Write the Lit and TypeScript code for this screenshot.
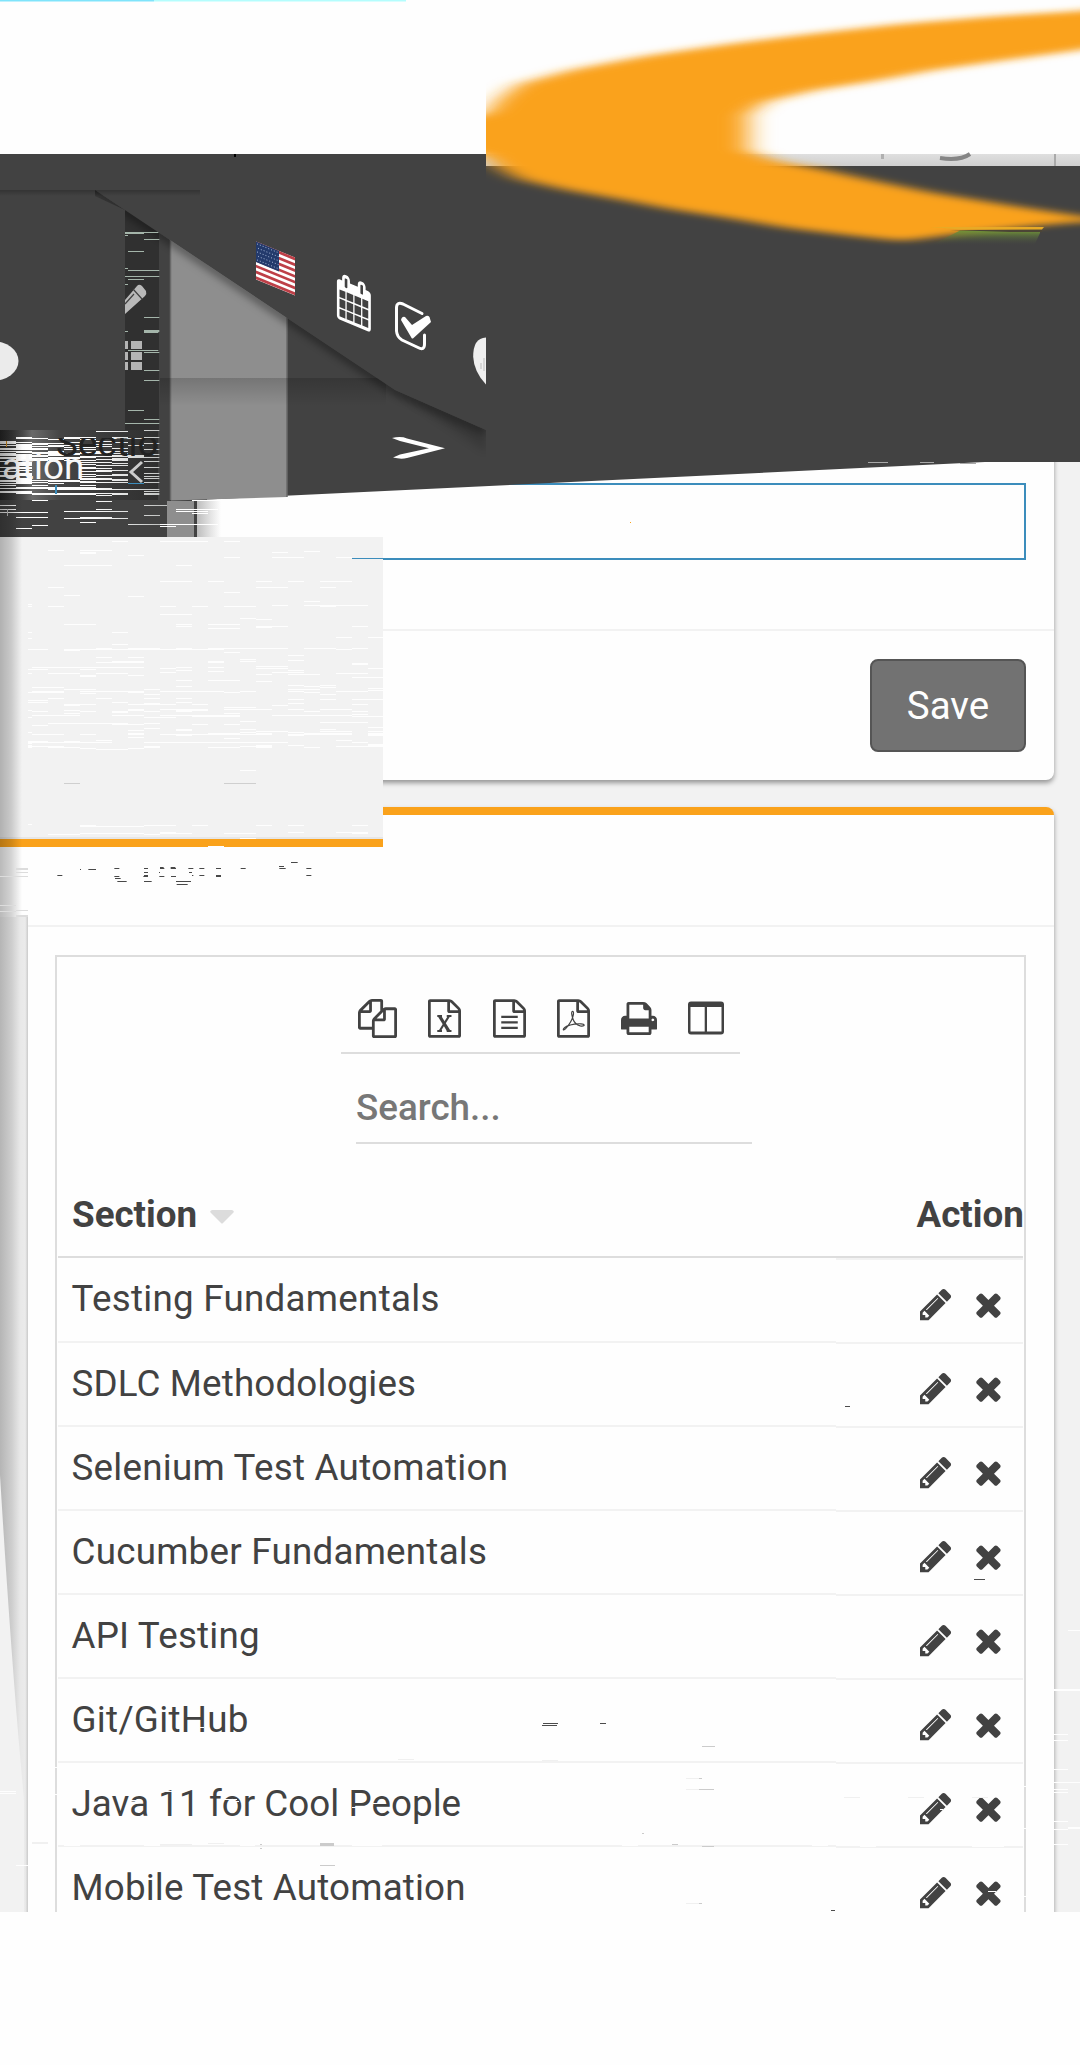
import { LitElement, html, css, svg } from "lit";
import { customElement } from "lit/decorators.js";

const FILE =
  "M1596 380q28 28 48 76t20 88v1152q0 40-28 68t-68 28h-1344q-40 0-68-28t-28-68v-1600q0-40 28-68t68-28h896q40 0 88 20t76 48zm-444-244v376h376q-10-29-22-41l-313-313q-12-12-41-22zm384 1528v-1024h-416q-40 0-68-28t-28-68v-416h-768v1536h1280z";
const COPY =
  "M1696 384q40 0 68 28t28 68v1216q0 40-28 68t-68 28h-960q-40 0-68-28t-28-68v-288h-544q-40 0-68-28t-28-68v-672q0-40 20-88t48-76l408-408q28-28 76-48t88-20h416q40 0 68 28t28 68v328q68-40 128-40h416zm-544 213l-299 299h299v-299zm-640-384l-299 299h299v-299zm196 647l316-316v-416h-384v416q0 40-28 68t-68 28h-416v640h512v-256q0-40 20-88t48-76zm956 804v-1152h-384v416q0 40-28 68t-68 28h-416v640h896z";
const PRINT =
  "M448 1536h896v-256h-896v256zm0-640h896v-384h-160q-40 0-68-28t-28-68v-160h-640v640zm1152 64q0-26-19-45t-45-19-45 19-19 45 19 45 45 19 45-19 19-45zm128 0v416q0 13-9.500 22.500t-22.500 9.500h-224v160q0 40-28 68t-68 28h-960q-40 0-68-28t-28-68v-160h-224q-13 0-22.500-9.500t-9.500-22.500v-416q0-79 56.500-135.500t135.500-56.500h64v-544q0-40 28-68t68-28h672q40 0 88 20t76 48l152 152q28 28 48 76t20 88v256h64q79 0 135.500 56.500t56.500 135.500z";
const PENCIL =
  "M491 1536l91-91-235-235-91 91v107h128v128h107zm523-928q0-22-22-22-10 0-17 7l-542 542q-7 7-7 17 0 22 22 22 10 0 17-7l542-542q7-7 7-17zm-54-192l416 416-832 832h-416v-416zm683 96q0 53-37 90l-166 166-416-416 166-165q36-38 90-38 53 0 91 38l235 234q37 39 37 91z";
const TIMES =
  "M1490 1322q0 40-28 68l-136 136q-28 28-68 28t-68-28l-294-294-294 294q-28 28-68 28t-68-28l-136-136q-28-28-28-68t28-68l294-294-294-294q-28-28-28-68t28-68l136-136q28-28 68-28t68 28l294 294 294-294q28-28 68-28t68 28l136 136q28 28 28 68t-28 68l-294 294 294 294q28 28 28 68z";
const CALENDAR =
  "M192 1664h288v-288h-288v288zm352 0h320v-288h-320v288zm-352-352h288v-320h-288v320zm352 0h320v-320h-320v320zm-352-384h288v-288h-288v288zm736 736h320v-288h-320v288zm-384-736h320v-288h-320v288zm768 736h288v-288h-288v288zm-384-352h320v-320h-320v320zm-352-864v-288q0-13-9.500-22.500t-22.500-9.500h-64q-13 0-22.500 9.500t-9.500 22.500v288q0 13 9.500 22.500t22.500 9.500h64q13 0 22.500-9.500t9.500-22.500zm736 864h288v-320h-288v320zm-384-384h320v-288h-320v288zm384 0h288v-288h-288v288zm32-480v-288q0-13-9.500-22.500t-22.500-9.500h-64q-13 0-22.500 9.500t-9.500 22.500v288q0 13 9.500 22.500t22.500 9.500h64q13 0 22.500-9.500t9.500-22.500zm384-64v1280q0 52-38 90t-90 38h-1408q-52 0-90-38t-38-90v-1280q0-52 38-90t90-38h128v-96q0-66 47-113t113-47h64q66 0 113 47t47 113v96h384v-96q0-66 47-113t113-47h64q66 0 113 47t47 113v96h128q52 0 90 38t38 90z";

// Section names with the tracking, in pixels, that each one is set with.
const SECTIONS: [string, number][] = [
  ["Testing Fundamentals", 0.27],
  ["SDLC Methodologies", 0.15],
  ["Selenium Test Automation", 0.25],
  ["Cucumber Fundamentals", 0.24],
  ["API Testing", 0.2],
  ["Git/GitHub", 0.3],
  ["Java 11 for Cool People", 0.04],
  ["Mobile Test Automation", 0.18],
];

// Streak lists: "y:x1-x2,x1-x2 ...", in thirds of a pixel; y counts from the list's own origin.
const PANEL_STREAKS =
  "183:336-384,480-624,672-720 210:144-192,240-336 213:912-960 216:240-288,816-864 219:240-288 225:384-432 231:672-720,816-912,1008-1056 255:192-336,528-576 303:480-576,624-672,768-816,864-912,960-1056 321:144-192,768-864,960-1008 336:672-720 345:192-240 348:384-432 363:912-960 372:84-96 375:816-864,912-1104 378:84-96,144-192,480-528,576-624,672-768,960-1008 402:480-576 414:720-768 417:768-816 432:192-288,528-576,624-720 438:528-576,768-864,1056-1104 441:768-816 444:624-720 456:84-96,336-384 471:1008-1056,1104-1149 474:84-96 492:336-384 504:288-336,384-480,528-576,624-864,912-1008,1056-1104 507:84-144,192-672,1008-1056 510:192-240 516:672-720 525:864-912 531:288-336,384-432 537:720-768 540:864-912 543:336-432,624-672,720-768 546:288-432,624-672 549:1056-1104 552:1056-1104 558:768-864 561:96-432,528-576,624-672 564:480-528,768-864,1104-1149 567:84-144,240-288 570:528-576,864-912 573:624-672 576:480-528,816-912 579:84-96,144-240,288-384,1008-1104 582:768-816,864-960 585:240-288,384-432 588:240-288 591:1056-1149 600:528-576,624-720 603:768-816 615:864-912,960-1008 618:528-576,912-960 621:96-192,960-1008 624:1104-1149 627:192-288,432-480,864-960 630:1104-1149 633:96-192,240-432,480-672,720-768,864-912,1008-1104 636:84-192,384-432,672-720,912-960 639:240-288 642:432-480,960-1008 654:144-192,288-336,432-480,528-576 657:864-912,960-1008,1056-1149 660:84-144 666:84-144,336-384,528-576 669:432-480,864-912 672:192-288,384-480,480-528,576-624,1056-1104 675:192-240,816-864 681:672-768 687:384-432,480-624,672-816,864-912,960-1056 690:84-96,192-240,384-432,528-624 693:96-144,240-288,336-384,432-480,528-576,912-960,1056-1104 696:336-384 699:192-240,672-720 702:1056-1104 705:96-240,336-432,480-720,816-1056 708:576-720,1056-1149 711:84-96,432-528 723:720-768 726:960-1104 729:144-336,336-384,432-480 732:336-432,576-624,672-720 735:96-144 741:1104-1149 744:432-480 747:528-576,720-768,960-1008 750:384-432,528-576 753:768-864,960-1056,1104-1149 756:84-96,720-768,864-912 759:384-432,624-720,768-816,912-1056,1104-1149 762:96-192,240-288,384-432,480-816,864-1056,1104-1149 765:528-576,864-912,1104-1149 771:384-432 774:672-720 780:288-336,1008-1056 783:84-144,192-240 786:84-144,144-336,432-864,1056-1104 789:84-96 792:1104-1149 795:84-96,768-816,864-912,1104-1149 798:84-192,432-480,720-816,1008-1149 801:84-96,144-240,432-480,624-720,768-816,912-960 804:240-288,384-432 807:288-384 870:720-768 1032:84-96 1035:240-288,432-528,576-624,768-816,864-912,1056-1104 1038:240-432 1056:480-528,864-912,1008-1104 1059:240-432,480-576,672-768,1056-1104 1062:144-240,432-480 1074:720-768 1098:624-672";
const DARK_STREAKS =
  "15:432-478 18:288-384 36:48-96,192-288,336-384,432-478 39:48-144,192-240,336-432 42:144-192,240-288 48:0-48,288-336 51:0-96,192-240,336-384 54:0-48,96-192,432-478 57:48-144,240-336 60:0-96,144-240,384-432 63:48-192,288-336 66:48-96,192-288 69:0-144,336-384 72:0-144,192-288,432-478 78:0-96,144-192,288-384 81:48-192,240-336 84:0-48,96-384 87:0-96,144-240,432-478 90:0-192,336-432 93:48-144,240-432 96:0-96,144-288,384-478 99:0-240,336-384 102:48-192,288-384 105:48-144,192-288,336-384 108:0-48,432-478 111:48-96,240-336 114:48-96,336-384 117:48-96,240-288 120:48-96,288-384 126:0-96,240-288,432-478 129:48-96,240-336 135:48-96,288-384 138:0-48,240-336 144:48-96,432-478 147:48-96,240-288,336-384 150:0-96,288-384 153:0-48,240-288,432-478 159:48-96,240-336,432-478 162:48-96,240-384 165:0-240,336-384 168:0-96,144-288 171:48-144,240-384,432-478 174:0-96,144-192 180:0-48,96-144,240-288 186:48-288 189:0-336 192:144-336,336-478 198:0-96,432-478 201:0-96 204:48-384,432-478 207:96-288,336-384,432-478 210:288-336 225:96-144 228:288-336 240:0-48,432-528 252:0-48,288-336,528-576 258:192-384,528-624 261:0-144,576-624 270:432-480 276:48-144,240-336 279:192-384 291:240-288 297:384-660 300:96-144 303:480-528 309:48-96";
const GREEN_STREAKS =
  "276:375-475 279:375-432 285:375-384 297:432-478 333:384-432 384:375-384 390:384-478 408:375-478 417:384-432 432:375-384 531:432-478 570:432-478 573:375-384,432-478 576:432-475 630:384-475 636:432-478 690:432-478 720:432-478 810:384-432 837:432-478 849:375-478";
const INK_STREAKS =
  "1146:873-893 1158:837-852 1161:480-491,512-526 1164:343-358,432-444,480-493,512-528,565-580,598-613,648-663,722-737,838-857,919-934 1167:240-243,265-288 1176:432-444,567-576,477-480 1185:172-187,432-444,576-580,598-613,648-663,919-934 1188:343-358,430-444,478-493,513-528,648-663 1194:345-362 1203:352-380,432-455,528-573 1212:530-563";

function streaks(list: string, top: number, fill: string) {
  return list.split(" ").flatMap((row) => {
    const [y, spans] = row.split(":");
    return spans.split(",").map((s) => {
      const [a, b] = s.split("-").map(Number);
      return svg`<rect x=${a / 3} y=${top + Math.floor(+y / 3)} width=${(b - a) / 3} height="1" fill=${fill}></rect>`;
    });
  });
}

const rects = (list: number[][], fill: string) =>
  list.map(([x, y, w, h]) => svg`<rect x=${x} y=${y} width=${w} height=${h ?? 1} fill=${fill}></rect>`);

@customElement("app-root")
export class AppRoot extends LitElement {
  static styles = css`
    :host { display: flex; flex-direction: column; position: relative; width: 1080px; height: 2065px; overflow: hidden;
      background: #fefefe; color: #424242; font-family: Roboto, "Liberation Sans", sans-serif; font-size: 36.75px; }
    * { box-sizing: border-box; }
    .page { margin-top: 154px; height: 1758px; background: #f2f2f2; padding: 0 26px 0 28px; overflow: hidden;
      display: flex; flex-direction: column; gap: 27px; }
    .card { background: #fefefe; border-radius: 8px; box-shadow: 0 3px 5px rgba(0,0,0,.38); flex: none; }
    .form { height: 626px; display: flex; flex-direction: column; }
    .form-body { height: 477px; padding: 329px 28px 0; border-bottom: 2px solid #f2f2f2; }
    .field { height: 77px; border: 2px solid #3c8dbc; }
    .form-foot { padding: 28px; display: flex; justify-content: flex-end; }
    .save { width: 156px; height: 93px; border: 2px solid #555; border-radius: 8px; background: #727272; font-size: 38.5px;
      color: #fefefe; display: flex; align-items: center; justify-content: center; padding-bottom: 1px; }
    .list { height: 1200px; border-top: 8px solid #faa21b; }
    .list-head { height: 112px; border-bottom: 2px solid #f2f2f2; }
    .list-body { padding: 28px 28px 0 27px; }
    .frame { border: 2px solid #ddd; height: 1100px; padding-top: 42px; display: flex; flex-direction: column; }
    .tools { margin-left: 284px; width: 399px; height: 55px; border-bottom: 2px solid #ddd; display: flex; padding-left: 17px; }
    .tool { display: block; flex: none; height: 39px; }
    .search { margin: 0 0 0 299px; width: 396px; height: 90px; border-bottom: 2px solid #ddd; color: #777;
      line-height: 44px; padding: 32px 0 0 0; font-weight: 500; }
    .row { display: grid; grid-template-columns: 778px 187px; margin-left: 1px; height: 84px; flex: none; }
    .cell { border-bottom: 2px solid #f2f2f2; padding-left: 13.5px; line-height: 44px; padding-top: 19px; white-space: nowrap; height: 84px; }
    .acts { margin-top: 1px; height: 84px; border-bottom: 2px solid #f2f2f2; display: flex; padding: 26px 0 0 84px; gap: 17px; }
    .head { height: 114px; font-weight: 700; border-bottom: 2px solid #ddd; width: 965px; white-space: nowrap; line-height: 44px; padding-top: 49px; }
    .first { height: 85px; }
    .first .cell { height: 85px; }
    .first .acts { border-top: 2px solid #f2f2f2; margin-top: 0; height: 86px; padding-top: 26px; }
    .h1 { padding-left: 14px; display: flex; gap: 13px; }
    .h2 { padding-left: 80.5px; }
    .caret { width: 24px; height: 14px; margin-top: 17px; }
    .art { position: absolute; left: 0; top: 0; width: 1080px; height: 2065px; pointer-events: none; }
    .frag { font-family: Roboto, sans-serif; font-size: 36.75px; }
  `;

  private tool(w: number, gap: number, vb: string, inner: unknown) {
    return html`<svg class="tool" width=${w} height="39" viewBox=${vb} style="margin-right:${gap}px" fill="#424242">${inner}</svg>`;
  }

  private renderTools() {
    const file = "128 0 1536 1792";
    return html`<div class="tools">
      ${this.tool(39, 31, "0 0 1792 1792", svg`<path d=${COPY}></path>`)}
      ${this.tool(33, 31.5, file, svg`<path d=${FILE}></path><path d="M560 780h220M1000 780h220M560 1480h220M1000 1480h220" stroke="#424242" stroke-width="100"></path><path d="M660 780L1100 1480" stroke="#424242" stroke-width="150"></path><path d="M1110 780L670 1480" stroke="#424242" stroke-width="100"></path>`)}
      ${this.tool(33, 31, file, svg`<path d=${FILE}></path><path d="M512 820h768M512 1076h768M512 1332h768" stroke="#424242" stroke-width="110"></path>`)}
      ${this.tool(33, 31, file, svg`<path d=${FILE}></path><path d="M850 560c-70 20-40 180 30 380 60 170 190 260 330 300 110 20 190 0 180-40-10-60-230-80-450-40-230 40-460 130-510 220-30 70 30 70 100-10 160-180 320-430 360-650 15-100 0-160-40-160z" fill="none" stroke="#424242" stroke-width="55"></path>`)}
      ${this.tool(36, 31, "64 0 1664 1792", svg`<path d=${PRINT}></path>`)}
      ${this.tool(36, 0, "0 0 36 39", svg`<path fill-rule="evenodd" d="M3 2.500h30a3 3 0 0 1 3 3v27a3 3 0 0 1-3 3H3a3 3 0 0 1-3-3v-27a3 3 0 0 1 3-3zM2.500 8v24.500h14.200V8zM19 8v24.500h14.500V8z"></path>`)}
    </div>`;
  }

  private renderArt() {
    const stripes = [0, 2, 4, 6, 8, 10, 12].map((i) => svg`<rect x="0" y=${i * 2.9} width="39" height="2.9" fill="#be3f47"></rect>`);
    const stars = Array.from({ length: 40 }, (_, i) => svg`<rect x=${1 + (i % 8) * 2.8 + (Math.floor(i / 8) % 2)} y=${1.500 + Math.floor(i / 8) * 4} width="1" height="1" fill="#9fb0cf"></rect>`);
    return html`<svg class="art" viewBox="0 0 1080 2065" aria-hidden="true">
      <defs>
        <filter id="soft" x="-10%" y="-10%" width="120%" height="120%"><feGaussianBlur stdDeviation="13 3"></feGaussianBlur></filter>
        <filter id="shade" x="-20%" y="-20%" width="140%" height="140%"><feGaussianBlur stdDeviation="4"></feGaussianBlur></filter>
        <clipPath id="right"><rect x="486" y="0" width="594" height="462"></rect></clipPath>
        <clipPath id="leftart"><rect x="0" y="154" width="486" height="347"></rect></clipPath>
        <clipPath id="under"><path d="M95 190L395 390L486 430V560H95z"></path></clipPath>
        <clipPath id="oct"><rect x="0" y="438" width="158" height="60"></rect></clipPath>
        <linearGradient id="edge"><stop offset="0" stop-color="#000" stop-opacity=".27"></stop><stop offset=".5" stop-color="#000" stop-opacity=".17"></stop><stop offset="1" stop-color="#000" stop-opacity="0"></stop></linearGradient>
        <linearGradient id="edge2"><stop offset="0" stop-color="#b5b5b5"></stop><stop offset=".42" stop-color="#cecece"></stop><stop offset=".72" stop-color="#e8e8e8"></stop><stop offset=".9" stop-color="#ebebeb"></stop><stop offset="1" stop-color="#cacaca"></stop></linearGradient>
        <linearGradient id="rise"><stop offset="0" stop-color="#bdbdbd"></stop><stop offset=".6" stop-color="#e6e6e6"></stop><stop offset="1" stop-color="#fefefe"></stop></linearGradient>
        <linearGradient id="strip" x2="0" y2="1"><stop offset="0" stop-color="#dfdfdf"></stop><stop offset="1" stop-color="#cfcfcf"></stop></linearGradient>
        <linearGradient id="fall" x2="0" y2="1"><stop offset="0" stop-color="#000" stop-opacity=".22"></stop><stop offset="1" stop-color="#000" stop-opacity="0"></stop></linearGradient>
        <linearGradient id="green" x2="0" y2="1"><stop offset="0" stop-color="#6f9438"></stop><stop offset="1" stop-color="#424242" stop-opacity="0"></stop></linearGradient>
        <linearGradient id="noise" gradientUnits="userSpaceOnUse" x1="0" x2="160" y1="0" y2="0"><stop offset="0" stop-color="#e4e4e4"></stop><stop offset=".16" stop-color="#fff"></stop><stop offset=".6" stop-color="#fbfbfb"></stop><stop offset="1" stop-color="#c2c4c3"></stop></linearGradient>
        <linearGradient id="pool" gradientUnits="userSpaceOnUse" x1="0" x2="160" y1="0" y2="0"><stop offset="0" stop-color="#262626"></stop><stop offset=".14" stop-color="#484848"></stop><stop offset=".2" stop-color="#6a6a6a"></stop><stop offset=".38" stop-color="#444"></stop><stop offset="1" stop-color="#2f2f2f"></stop></linearGradient>
      </defs>
      <rect x="0" y="0" width="154" height="1.500" fill="#80e4fb"></rect><rect x="154" y="0" width="252" height="1.500" fill="#b4fdfd"></rect>

      <path d="M0 154H1080V462H985L207 499.500V501H0z" fill="#424242"></path>
      ${rects([[868, 462, 20], [920, 462, 14], [960, 463, 16]], "#a8a8a8")}
      <rect x="0" y="190" width="200" height="6" fill="url(#fall)"></rect>
      <g clip-path="url(#leftart)">
        <rect x="125" y="200" width="34" height="230" fill="#303030"></rect>
        <path d="M171 220H287V497L171 500.500z" fill="#8e8e8e"></path>
        <path d="M170.500 220V500M287 290V497" stroke="#6a6a6a" stroke-width="1.500"></path>
        <rect x="160" y="378" width="226" height="28" fill="url(#fall)" opacity=".8"></rect>
        <g clip-path="url(#under)"><path d="M85 183L395 390L486 430" fill="none" stroke="#000" stroke-opacity=".4" stroke-width="9" filter="url(#shade)"></path>
          <path d="M395 390L486 430V452z" fill="#000" opacity=".14" filter="url(#shade)"></path></g>
        <path d="M95 190L95 154H486V430L395 390z" fill="#424242"></path>
        <rect x="95" y="190" width="105" height="6" fill="url(#fall)"></rect>
        <path d="M0 196H95L125 210V430H0z" fill="#424242"></path>
      </g>
      <rect x="234" y="154" width="2" height="3" fill="#000"></rect>
      <path d="M125 300L137 286Q139 283.500 142 286L146 291Q147 294 145 296L125 314z" fill="#b9b9b9"></path>
      <path d="M133 289l9 10M125 304l9-10" stroke="#424242" stroke-width="1.200"></path>
      ${rects([[125, 341, 3, 8], [131, 341, 11, 8], [125, 352, 3, 8], [131, 352, 11, 8], [125, 362, 3, 8], [131, 362, 11, 8]], "#b4b4b4")}
      ${streaks(GREEN_STREAKS, 140, "#a4b5aa")}
      <ellipse cx="-8" cy="361" rx="26.500" ry="20" fill="#ebebeb"></ellipse>

      <g transform="matrix(1 .41 0 1 256 241.500)"><rect width="39" height="38" fill="#fff"></rect>${stripes}<rect width="23" height="20.500" fill="#233a6c"></rect>${stars}</g>
      <path transform="matrix(.0204 .0084 0 .0262 335.600 271)" fill="#fff" d=${CALENDAR}></path>
      <path d="M422 313.500L403 304Q396.500 301.500 396.500 308V331Q397 337 402 340L418 347.500Q424.500 351 424.500 344V335" fill="none" stroke="#fff" stroke-width="3" stroke-linecap="round"></path>
      <path d="M401 320Q402 316 405 317L412 325L426 316Q428 315 429.500 317L431 322L413.500 338Q412 339.500 411 337z" fill="#fff"></path>
      <path d="M486 337.500Q473 338 473.200 357Q474 372 486 384.500z" fill="#efefef"></path><path d="M481 363v6M484 358v13" stroke="#bbb" stroke-width="1"></path>
      <path d="M392 438Q401 436 407 438.500L445 448.200L407 458Q401 459.500 393 457.500L400 454.500L429 448.300L400 441z" fill="#fff"></path>

      <g clip-path="url(#right)">
        <rect x="486" y="154" width="594" height="12" fill="url(#strip)"></rect>
        <rect x="1054" y="154" width="2" height="12" fill="#aaa"></rect><rect x="881" y="154" width="3" height="5" fill="#b0b0b0"></rect>
        <path d="M940 158Q960 161 970 154" fill="none" stroke="#858585" stroke-width="4"></path>
        <path filter="url(#soft)" fill="#faa21b" d="M440 124L486 113L500 98L519 84L571 70L645 56L729 44L810 34L900 24L1000 16L1080 11L1140 5V40L1080 50L1006 60L934 70L875 81L816 90L765 102L748 115V150L776 161L816 168L875 181L934 193L1014 206L1080 216L1130 222L1080 222L1033 226L966 233L903 241L855 236L788 228L729 218L670 209L618 199L567 190L519 179L500 169L486 157L440 146z"></path>
        <path d="M930 227H1044L1042 229.500H960z" fill="#e8aa25"></path><path d="M960 230.500H1040V233L1034 246H930z" fill="url(#green)"></path>
        <path d="M950 230H1042V232H1010z" fill="#4c4535"></path>
      </g>

      <rect x="0" y="430" width="160" height="70" fill="url(#pool)"></rect>
      <rect x="0" y="500" width="167" height="37" fill="#424242"></rect><rect x="158" y="430" width="9" height="71" fill="#424242"></rect>
      ${streaks(DARK_STREAKS, 425, "url(#noise)")}
      <rect x="167" y="501" width="27" height="36" fill="#8e8e8e"></rect><rect x="194" y="501" width="3" height="36" fill="#424242"></rect><rect x="197" y="501" width="24" height="36" fill="url(#rise)"></rect>
      ${rects([[192, 500, 16], [176, 509, 42], [176, 511, 32], [192, 513, 16], [160, 524, 58], [160, 526, 16]], "#fff")}
      <g clip-path="url(#oct)"><text class="frag" x="56" y="456" fill="#222">Sectio</text></g>
      <text class="frag" x="2" y="479" fill="#f8f8f8">ation</text>
      <path d="M142 462L131 472L142 482" fill="none" stroke="#ccc" stroke-width="3"></path>
      ${rects([[55, 485, 2, 9], [128, 483, 16, 1]], "#3c8dbc")}${rects([[6, 441, 1, 6]], "#d08a20")}${rects([[7, 509, 1, 7]], "#bbb")}

      <rect x="0" y="537" width="383" height="302" fill="#f2f2f2"></rect>
      <rect x="0" y="837" width="383" height="2" fill="#e6e6e6"></rect>
      <rect x="0" y="839" width="383" height="8" fill="#faa21b"></rect>
      <rect x="0" y="847" width="383" height="70" fill="#fefefe"></rect>
      <rect x="352" y="558" width="31" height="1" fill="#3c8dbc"></rect><rect x="55" y="550" width="2" height="1" fill="#3c8dbc"></rect>
      ${streaks(PANEL_STREAKS, 480, "#fefefe")}
      ${rects([[64, 783, 16], [224, 783, 32]], "#cfcfcf")}
      ${streaks(INK_STREAKS, 480, "#484848")}
      <rect x="0" y="430" width="22" height="487" fill="url(#edge)"></rect>
      ${rects([[16, 868, 12, 2], [16, 872, 12], [0, 876, 28], [0, 905, 16], [16, 910, 12], [0, 911, 16], [16, 915, 12, 2]], "#dcdcdc")}
      <rect x="0" y="917" width="28" height="995" fill="url(#edge2)"></rect>
      <path d="M0 1475Q10 1640 20 1755L24 1800V1912H0z" fill="#f2f2f2"></path>
      ${rects([[0, 1791, 16, 1], [0, 1793, 16, 1], [16, 1865, 12, 1], [1068, 1630, 12, 1], [1054, 1689, 26, 2], [1054, 1734, 14], [1054, 1740, 14], [1054, 1769, 14], [1054, 1782, 26], [1054, 1789, 14], [1054, 1792, 14], [1054, 1821, 14], [1054, 1829, 14], [1068, 1827, 12, 2], [1054, 1844, 14], [162, 1791, 10], [131, 1800, 6], [223, 1799, 14], [229, 1801, 10], [200, 1727, 4], [352, 1807, 4], [373, 1803, 8], [988, 1891, 8], [940, 1809, 3], [55, 1767, 3], [55, 1794, 3], [1024, 1786, 3], [1024, 1828, 3], [1024, 1896, 3], [64, 1845, 16], [144, 1845, 16], [240, 1845, 15], [352, 1845, 30], [622, 1845, 16], [812, 1845, 16], [860, 1846, 16], [972, 1846, 32]], "#fefefe")}
      ${rects([[845, 1406, 5], [974, 1579, 11], [543, 1723, 15], [542, 1725, 15], [600, 1723, 6], [831, 1910, 4]], "#4c4c4c")}
      ${rects([[702, 1746, 13], [699, 1778, 3], [699, 1789, 15], [672, 1844, 6], [702, 1846, 12], [699, 1903, 3], [320, 1843, 14, 3], [320, 1865, 15], [642, 1833, 2], [260, 1844, 2], [260, 1848, 2]], "#cbcbcb")}
      ${rects([[686, 1778, 13], [686, 1789, 13], [686, 1903, 13], [844, 1797, 16], [908, 1797, 16], [972, 1797, 16], [32, 1842, 16, 2], [398, 1759, 16], [160, 1844, 32], [208, 1843, 16], [542, 1760, 16]], "#f0f0f0")}
      <rect x="630" y="522" width="1" height="1" fill="#faa21b"></rect>
    </svg>`;
  }

  render() {
    return html`
      <main class="page">
        <section class="card form">
          <div class="form-body"><div class="field"></div></div>
          <div class="form-foot"><div class="save">Save</div></div>
        </section>
        <section class="card list">
          <div class="list-head"></div>
          <div class="list-body"><div class="frame">
            ${this.renderTools()}
            <div class="search">Search...</div>
            <div class="row head">
              <div class="h1">Section <svg class="caret" viewBox="0 0 24 14"><path d="M2 0H22Q25 1 23 3L13 13Q12 14 11 13L1 3Q-1 1 2 0z" fill="#dcdcdc"></path></svg></div>
              <div class="h2">Action</div>
            </div>
            ${SECTIONS.map(([name, tracking], i) => html`<div class="row ${i === 0 ? "first" : ""}">
              <div class="cell" style="letter-spacing:${tracking}px">${name}</div>
              <div class="acts">
                <svg width="36.750" height="36.750" viewBox="128 0 1792 1792" fill="#424242"><path d=${PENCIL}></path></svg>
                <svg width="36.750" height="36.750" viewBox="192 0 1792 1792" fill="#424242"><path d=${TIMES}></path></svg>
              </div>
            </div>`)}
          </div></div>
        </section>
      </main>
      ${this.renderArt()}
    `;
  }
}
